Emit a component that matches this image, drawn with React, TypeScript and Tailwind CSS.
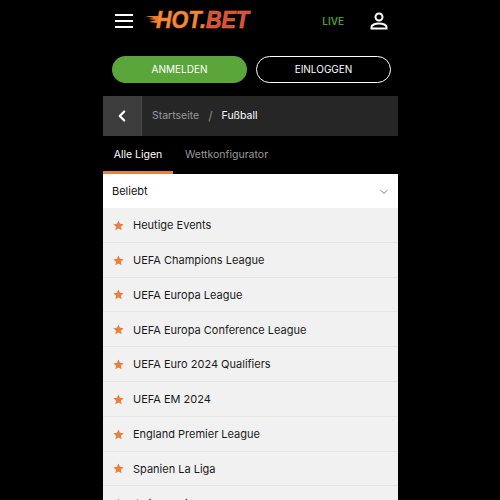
import { ChevronLeft, ChevronDown } from "lucide-react";

const leagues = [
  "Heutige Events",
  "UEFA Champions League",
  "UEFA Europa League",
  "UEFA Europa Conference League",
  "UEFA Euro 2024 Qualifiers",
  "UEFA EM 2024",
  "England Premier League",
  "Spanien La Liga",
  "Italien Serie A",
];

function Star() {
  return (
    <svg viewBox="0 0 24 24" className="w-[11px] h-[11px] shrink-0 fill-[#e8813f]">
      <path d="M12 1l3.300 7.400 8 .8-6 5.400 1.700 7.900L12 18.500 5 22.500l1.700-7.900-6-5.400 8-.8z" />
    </svg>
  );
}

export default function App() {
  return (
    <div className="w-[500px] h-[500px] overflow-hidden bg-black flex justify-center" style={{ fontFamily: "Inter, sans-serif" }}>
      <div className="w-[295px] ml-[1px]">
        {/* Header */}
        <div className="h-[42px] flex items-center pl-[12px] pr-[10px]">
          <div className="w-[18px] flex flex-col gap-[4px]">
            <div className="h-[2px] bg-white" />
            <div className="h-[2px] bg-white" />
            <div className="h-[2px] bg-white" />
          </div>
          <svg viewBox="0 0 108 20" className="w-[108px] h-[20px] ml-[12px] overflow-visible">
            <path d="M0 5l9 2-6 1 8 1-7 2 8 1 5-5-3-2z" fill="#ef7a2c" />
            <text x="11" y="17" fontFamily="Liberation Sans" fontStyle="italic" fontWeight="700" fontSize="23" stroke="#e8702f" strokeWidth="0.6" textLength="93" lengthAdjust="spacingAndGlyphs">
              <tspan fill="#f28c35">HOT.</tspan>
              <tspan fill="#d9503a">BET</tspan>
            </text>
          </svg>
          <span className="ml-auto text-[10px] font-semibold text-[#4f9a35]">LIVE</span>
          <svg viewBox="0 0 18 18" className="w-[18px] h-[18px] ml-[26px] fill-none stroke-white stroke-2">
            <circle cx="9" cy="5" r="3.500" />
            <path d="M1.500 16.500v-1.500c0-2 3.500-3.500 7.500-3.500s7.500 1.500 7.500 3.500v1.500z" />
          </svg>
        </div>
        {/* Buttons */}
        <div className="flex gap-[9px] pl-[9px] mt-[14px]">
          <button className="w-[135px] h-[27px] shrink-0 rounded-full bg-[#5aa63a] text-white text-[10px]">ANMELDEN</button>
          <button className="w-[135px] h-[27px] shrink-0 rounded-full border border-white text-white text-[10px]">EINLOGGEN</button>
        </div>
        {/* Breadcrumb */}
        <div className="h-[40px] mt-[13px] flex items-center bg-[#262626] text-[10.500px]">
          <div className="w-[39px] h-full flex items-center justify-center bg-[#3c3c3c] border-r-[1px] border-[#4a4a4a]">
            <ChevronLeft size={18} strokeWidth={3} className="text-white" />
          </div>
          <span className="ml-[10px] text-[#9a9a9a]">Startseite</span>
          <span className="mx-[9px] text-[#8a8a8a] text-[12px]">/</span>
          <span className="text-white">Fußball</span>
        </div>
        {/* Tabs */}
        <div className="h-[38px] flex text-[10.500px]">
          <div className="w-[70px] pt-[3px] flex items-center justify-center text-white border-b-[3px] border-[#e8813f]">Alle Ligen</div>
          <div className="ml-[12px] flex items-center text-[#9a9a9a]">Wettkonfigurator</div>
        </div>
        {/* Dropdown */}
        <div className="h-[34px] pt-[1px] bg-white flex items-center justify-between pl-[9px] pr-[8px] text-[11px] text-[#111]">
          <span>Beliebt</span>
          <ChevronDown size={12} className="text-[#777]" />
        </div>
        {/* League list */}
        <div>
          {leagues.map((name) => (
            <div key={name} className="h-[34.800px] pt-[1px] flex items-center gap-[9px] pl-[10px] bg-[#f1f1f1] border-b border-[#e6e6e6] text-[11px] text-[#1a1a1a]">
              <Star />
              <span>{name}</span>
            </div>
          ))}
        </div>
      </div>
    </div>
  );
}
